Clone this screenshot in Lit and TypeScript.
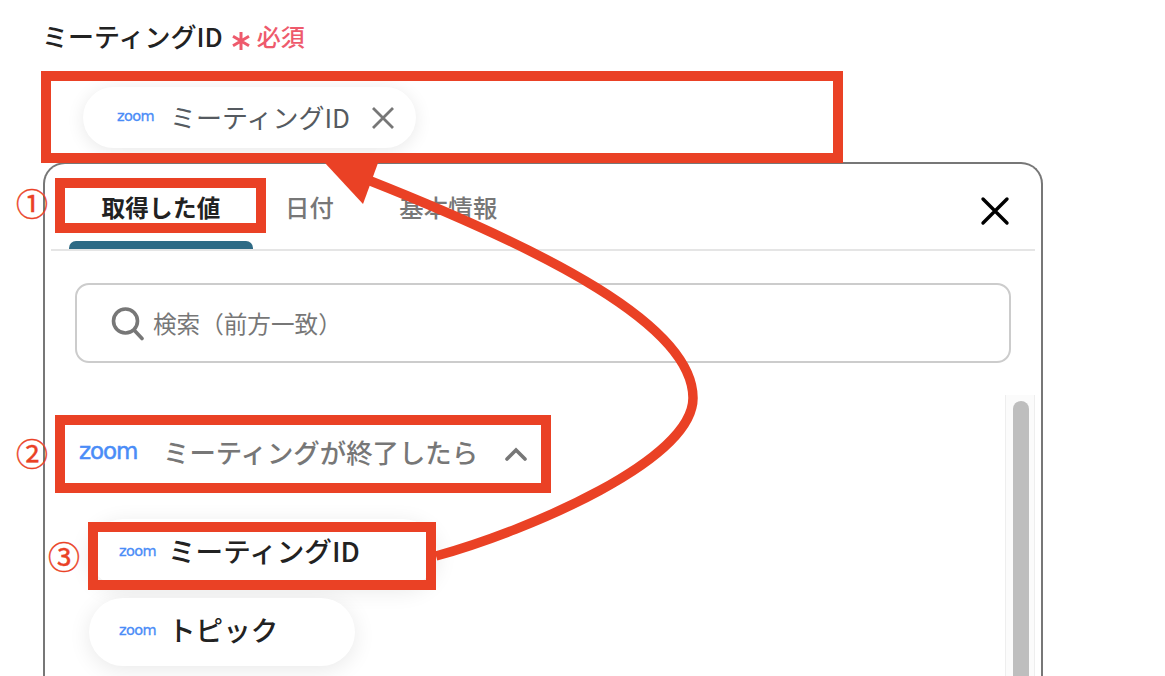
import { LitElement, html, css, svg } from "lit";
import { customElement } from "lit/decorators.js";

const logo = (cls: string) => html`<span class="logo ${cls}">zoom</span>`;

@customElement("app-root")
export class AppRoot extends LitElement {
  static styles = css`
    :host {
      display: block;
      position: relative;
      width: 1165px;
      height: 676px;
      overflow: hidden;
      background: #fff;
      font-family: "Noto Sans CJK JP", "Liberation Sans", sans-serif;
      color: #222;
    }
    .page { padding: 20px 122px 0 44px; }
    .label { display: flex; align-items: center; height: 34px; }
    .label-text { font-size: 26px; font-weight: 500; line-height: 34px; color: #222; margin-left: -2px; padding-bottom: 3px; }
    .star { margin-left: 9px; margin-top: 7px; width: 18px; height: 20px; display: block; }
    .req { margin-left: 7px; font-size: 24px; font-weight: 500; line-height: 34px; color: #ee5a6c; padding-bottom: 2px; }
    .field { padding: 33px 0 14px 39px; }
    .chip {
      display: inline-flex; align-items: center; height: 61px; width: 333px;
      box-sizing: border-box; padding-left: 34px; border-radius: 31px; background: #fff;
      box-shadow: 0 3px 18px rgba(0,0,0,.09);
    }
    .chip-text { margin-left: 16px; font-size: 26px; color: #555a60; line-height: 1; padding-bottom: 2px; }
    .chip-x { margin-left: 20px; width: 26px; height: 26px; display: block; }
    .logo { font-family: "DejaVu Sans", sans-serif; color: #4a8cf7; line-height: 1; display: block; white-space: nowrap; -webkit-text-stroke: .3px #4a8cf7; }
    .logo.s { font-size: 14.5px; width: 37px; letter-spacing: -.6px; padding-bottom: 3px; }
    .logo.l { font-size: 23px; width: 57px; letter-spacing: -1.1px; -webkit-text-stroke: .5px #4a8cf7; padding-bottom: 4px; }
    .modal {
      box-sizing: border-box; height: 700px; margin-left: -1px; border: 2px solid #777; border-bottom: none;
      border-radius: 22px 22px 0 0; background: #fff;
    }
    .tabs {
      display: flex; height: 87px; box-sizing: border-box; margin: 0 6px 0 6px;
      padding-left: 18px; border-bottom: 2px solid #e5e5e5;
    }
    .tab {
      display: flex; align-items: center; padding: 8px 33px 0 32px; box-sizing: border-box;
      height: 77px; font-size: 24.4px; font-weight: 500; color: #777; letter-spacing: .2px;
    }
    .tab-first { display: flex; flex-direction: column; width: 184px; }
    .tab-first .tab { justify-content: center; padding: 8px 0 0; color: #222; font-weight: 700; font-size: 23.6px; }
    .bar { height: 8px; background: #2e6a85; border-radius: 7px 7px 0 0; }
    .close { margin-left: auto; margin-right: 24px; padding-top: 9px; display: flex; align-items: center; }
    .close svg { width: 32px; height: 32px; display: block; }
    .search {
      margin: 32px 30px 0 30px; height: 80px; box-sizing: border-box; border: 2px solid #ccc;
      border-radius: 14px; display: flex; align-items: center; padding-left: 34px;
    }
    .search svg { width: 33px; height: 35px; display: block; }
    .search span { margin-left: 9px; font-size: 23.6px; color: #777; }
    .content { display: flex; margin-top: 32px; }
    .list { flex: 1; padding-top: 29px; }
    .section { display: flex; align-items: center; height: 59px; padding-left: 34px; }
    .section-text { margin-left: 27px; font-size: 26.4px; font-weight: 500; color: #777; padding-bottom: 4px; }
    .chev { margin-left: 26px; margin-top: 1px; width: 24px; height: 16px; display: block; }
    .rows { display: flex; flex-direction: column; align-items: flex-start; gap: 11px; margin: 36px 0 0 44px; }
    .row {
      display: flex; align-items: center; height: 68px; box-sizing: border-box; width: 348px; padding: 0 0 0 30px; border-radius: 34px;
      background: #fff; box-shadow: 0 4px 22px rgba(0,0,0,.09);
    }
    .row.short { width: 266px; }
    .row-text { margin-left: 12px; font-size: 27.6px; font-weight: 500; color: #222; line-height: 1; padding-bottom: 4px; }
    .track {
      width: 30px; box-sizing: border-box; height: 400px; margin-right: 6px; padding: 6px 5px 0 7px;
      background: #fbfbfb; border-left: 1px solid #eee; border-right: 1px solid #eee;
    }
    .thumb { height: 380px; border-radius: 8px; background: #bebebe; }
    .overlay { position: absolute; inset: 0; width: 1165px; height: 676px; pointer-events: none; }
    .num { position: absolute; font-size: 32px; line-height: 32px; color: #ea4125; width: 32px; text-align: center; -webkit-text-stroke: .4px #ea4125; }
    .n1 { left: 16px; top: 186px; }
    .n2 { left: 16px; top: 436px; }
    .n3 { left: 48px; top: 539px; }
  `;

  render() {
    return html`
      <div class="page">
        <div class="label">
          <span class="label-text">ミーティングID</span>
          <svg class="star" viewBox="0 0 18 20" fill="none" stroke="#ee5a6c" stroke-width="3">
            <path d="M9 1V19M1 5.2L17 14.8M17 5.2L1 14.8" />
          </svg>
          <span class="req">必須</span>
        </div>
        <div class="field">
          <div class="chip">
            ${logo("s")}
            <span class="chip-text">ミーティングID</span>
            <svg class="chip-x" viewBox="0 0 26 26" fill="none" stroke="#777" stroke-width="2.8">
              <path d="M3 3L23 23M23 3L3 23" />
            </svg>
          </div>
        </div>
        <div class="modal">
          <div class="tabs">
            <div class="tab-first"><div class="tab">取得した値</div><div class="bar"></div></div>
            <div class="tab">日付</div>
            <div class="tab">基本情報</div>
            <div class="close">
              <svg viewBox="0 0 32 32" fill="none" stroke="#000" stroke-width="3.4" stroke-linecap="round">
                <path d="M4 4L28 28M28 4L4 28" />
              </svg>
            </div>
          </div>
          <div class="search">
            <svg viewBox="0 0 33 35" fill="none" stroke="#777" stroke-width="3.6" stroke-linecap="round">
              <circle cx="14.5" cy="15" r="12" />
              <path d="M23.5 24.5L31 32.5" />
            </svg>
            <span>検索（前方一致）</span>
          </div>
          <div class="content">
            <div class="list">
              <div class="section">
                ${logo("l")}
                <span class="section-text">ミーティングが終了したら</span>
                <svg class="chev" viewBox="0 0 24 16" fill="none" stroke="#777" stroke-width="3.6" stroke-linecap="round" stroke-linejoin="miter">
                  <path d="M3 13L12 4L21 13" />
                </svg>
              </div>
              <div class="rows">
                <div class="row">${logo("s")}<span class="row-text">ミーティングID</span></div>
                <div class="row short">${logo("s")}<span class="row-text">トピック</span></div>
              </div>
            </div>
            <div class="track"><div class="thumb"></div></div>
          </div>
        </div>
      </div>
      <svg class="overlay" viewBox="0 0 1165 676" fill="none" stroke="#ea4125">
        ${svg`
          <rect x="46" y="76" width="792" height="82" stroke-width="10" />
          <rect x="60" y="183" width="201" height="45" stroke-width="10" />
          <rect x="60" y="420" width="486" height="68" stroke-width="10" />
          <rect x="93" y="527" width="338" height="58" stroke-width="10" />
          <path d="M436 556C530 530 693 460 693 398C693 325 545 250 368 180" stroke-width="9.5" />
          <path d="M325 163H378L363 204Z" fill="#ea4125" stroke="none" />
        `}
      </svg>
      <span class="num n1">①</span>
      <span class="num n2">②</span>
      <span class="num n3">③</span>
    `;
  }
}
